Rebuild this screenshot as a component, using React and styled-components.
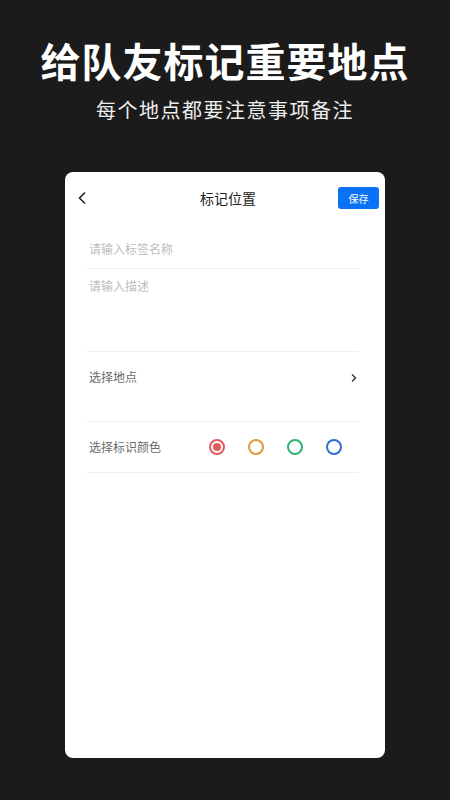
import React, { useState } from 'react'
import styled, { createGlobalStyle } from 'styled-components'

const GlobalStyle = createGlobalStyle`
  html, body {
    margin: 0;
    padding: 0;
    background: #1b1b1b;
  }
  body {
    font-family: "Noto Sans CJK SC", "Noto Sans", sans-serif;
  }
`

const Page = styled.div`
  width: 450px;
  height: 800px;
  background: #1b1b1b;
  display: flex;
  flex-direction: column;
  align-items: center;
  box-sizing: border-box;
  padding-top: 33px;
`

const Headline = styled.h1`
  margin: 0;
  color: #fff;
  font-size: 40px;
  font-weight: 600;
  line-height: 54px;
  letter-spacing: 1px;
`

const Subline = styled.p`
  margin: 10px 0 0;
  color: #eee;
  font-size: 20px;
  line-height: 26px;
  letter-spacing: 1.5px;
`

const Card = styled.div`
  margin-top: 49px;
  width: 320px;
  height: 586px;
  background: #fff;
  border-radius: 8px;
  display: flex;
  flex-direction: column;
`

const NavBar = styled.div`
  display: flex;
  align-items: center;
  justify-content: space-between;
  height: 52px;
  padding: 0 6px 0 12px;
`

const BackButton = styled.div`
  width: 41px;
  display: flex;
  align-items: center;
`

const NavTitle = styled.div`
  font-size: 14px;
  color: #222;
`

const SaveButton = styled.button`
  width: 41px;
  height: 22px;
  border: none;
  border-radius: 3px;
  background: #0a72f5;
  color: #fff;
  font-family: inherit;
  font-size: 10px;
  padding: 0;
`

const Form = styled.div`
  display: flex;
  flex-direction: column;
  padding: 3px 26px 0 22px;
`

const Field = styled.div`
  border-bottom: 1px solid #eeeeee;
  height: ${(p) => p.h}px;
  box-sizing: border-box;
  padding-top: ${(p) => p.pt || 0}px;
  display: flex;
  align-items: ${(p) => (p.center ? 'center' : 'flex-start')};
  justify-content: space-between;
  padding-left: 2px;
`

const Placeholder = styled.span`
  font-size: 12px;
  color: #bdbdbd;
  line-height: 18px;
`

const Label = styled.span`
  font-size: 12px;
  color: #6a6a6a;
  line-height: 18px;
`

const Arrow = styled.svg`
  margin-top: 5px;
  margin-right: 1px;
`

const Swatches = styled.div`
  display: flex;
  gap: 23px;
  margin-right: 17px;
`

const Swatch = styled.div`
  width: 16px;
  height: 16px;
  box-sizing: border-box;
  border-radius: 50%;
  border: 2px solid ${(p) => p.color};
  display: flex;
  align-items: center;
  justify-content: center;

  &::after {
    content: '';
    width: 8px;
    height: 8px;
    border-radius: 50%;
    background: ${(p) => (p.active ? p.color : 'transparent')};
  }
`

const colors = ['#e45b5b', '#e3983f', '#2fb571', '#2f6fd0']

export default function App() {
  const [active, setActive] = useState(0)

  return (
    <Page>
      <GlobalStyle />
      <Headline>给队友标记重要地点</Headline>
      <Subline>每个地点都要注意事项备注</Subline>
      <Card>
        <NavBar>
          <BackButton>
            <svg width="10" height="14" viewBox="0 0 10 14">
              <path d="M8 1.5L2.5 7L8 12.5" fill="none" stroke="#222" strokeWidth="1.6" />
            </svg>
          </BackButton>
          <NavTitle>标记位置</NavTitle>
          <SaveButton>保存</SaveButton>
        </NavBar>
        <Form>
          <Field h={42} pt={13}>
            <Placeholder>请输入标签名称</Placeholder>
          </Field>
          <Field h={83} pt={8}>
            <Placeholder>请输入描述</Placeholder>
          </Field>
          <Field h={70} pt={16}>
            <Label>选择地点</Label>
            <Arrow width="8" height="10" viewBox="0 0 8 10">
              <path d="M2 1.5L5.5 5L2 8.5" fill="none" stroke="#333" strokeWidth="1.4" />
            </Arrow>
          </Field>
          <Field h={51} center>
            <Label>选择标识颜色</Label>
            <Swatches>
              {colors.map((c, i) => (
                <Swatch key={c} color={c} active={i === active} onClick={() => setActive(i)} />
              ))}
            </Swatches>
          </Field>
        </Form>
      </Card>
    </Page>
  )
}
